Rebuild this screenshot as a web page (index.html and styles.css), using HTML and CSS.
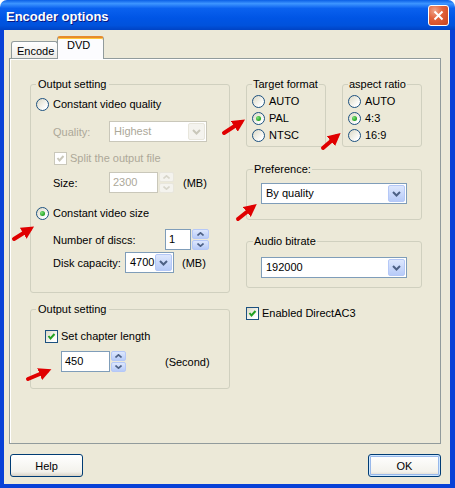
FILE: index.html
```html
<!DOCTYPE html>
<html lang="en">
<head>
  <meta charset="UTF-8">
  <title>Encoder options</title>
  <link rel="stylesheet" href="styles.css">
</head>
<body>

  <div class="window">
    <div class="titlebar">
      <span class="title">Encoder options</span>
      <span class="close">
        <svg width="11" height="11" viewBox="0 0 11 11"><path d="M1.5 1.5 L9.5 9.5 M9.5 1.5 L1.5 9.5" stroke="#fff" stroke-width="2"/></svg>
      </span>
    </div>

    <div class="frame">
      <!-- Tabs -->
      <div class="tabs">
        <div class="tab">Encode</div>
        <div class="tab active">DVD</div>
      </div>

      <div class="panel">
        <!-- Left column -->
        <div class="col-left">
          <fieldset class="group out-main">
            <legend>Output setting</legend>
            <div class="row opt first">
              <span class="radio"></span><span class="lbl">Constant video quality</span>
            </div>
            <div class="row sub quality">
              <span class="name w56 off">Quality:</span>
              <div class="combo off w-quality"><span class="val">Highest</span><span class="drop"><svg width="9" height="6" viewBox="0 0 9 6"><path d="M1 1 L4.5 4.5 L8 1" fill="none" stroke="#c9c7ba" stroke-width="2"/></svg></span></div>
            </div>
            <div class="row opt split">
              <span class="check off"><svg width="11" height="11" viewBox="0 0 11 11"><path d="M2.5 5 L4.5 7.5 L8.5 3" fill="none" stroke="#cac8bb" stroke-width="2"/></svg></span><span class="lbl off">Split the output file</span>
            </div>
            <div class="row sub size">
              <span class="name w56">Size:</span>
              <span class="edit off w-size">2300</span>
              <span class="spin off"><span><svg width="7" height="4" viewBox="0 0 7 4"><path d="M0.5 3.5 L3.5 0.8 L6.5 3.5" fill="none" stroke="#d8d6cb" stroke-width="1.6"/></svg></span><span><svg width="7" height="4" viewBox="0 0 7 4"><path d="M0.5 0.5 L3.5 3.2 L6.5 0.5" fill="none" stroke="#d8d6cb" stroke-width="1.6"/></svg></span></span>
              <span class="unit">(MB)</span>
            </div>
            <div class="row opt second">
              <span class="radio on"></span><span class="lbl">Constant video size</span>
            </div>
            <div class="row sub discs">
              <span class="name w112">Number of discs:</span>
              <span class="edit w-discs">1</span>
              <span class="spin"><span><svg width="7" height="4" viewBox="0 0 7 4"><path d="M0.5 3.5 L3.5 0.8 L6.5 3.5" fill="none" stroke="#4d6185" stroke-width="1.6"/></svg></span><span><svg width="7" height="4" viewBox="0 0 7 4"><path d="M0.5 0.5 L3.5 3.2 L6.5 0.5" fill="none" stroke="#4d6185" stroke-width="1.6"/></svg></span></span>
            </div>
            <div class="row sub disk">
              <span class="name w72">Disk capacity:</span>
              <div class="combo w-disk"><span class="val">4700</span><span class="drop"><svg width="9" height="6" viewBox="0 0 9 6"><path d="M1 1 L4.5 4.5 L8 1" fill="none" stroke="#4d6185" stroke-width="2"/></svg></span></div>
              <span class="unit">(MB)</span>
            </div>
          </fieldset>

          <fieldset class="group out-chapter">
            <legend>Output setting</legend>
            <div class="row opt chapter">
              <span class="check"><svg width="11" height="11" viewBox="0 0 11 11"><path d="M2.5 5 L4.5 7.5 L8.5 3" fill="none" stroke="#21a121" stroke-width="2"/></svg></span><span class="lbl">Set chapter length</span>
            </div>
            <div class="row seconds">
              <span class="edit w-sec">450</span>
              <span class="spin"><span><svg width="7" height="4" viewBox="0 0 7 4"><path d="M0.5 3.5 L3.5 0.8 L6.5 3.5" fill="none" stroke="#4d6185" stroke-width="1.6"/></svg></span><span><svg width="7" height="4" viewBox="0 0 7 4"><path d="M0.5 0.5 L3.5 3.2 L6.5 0.5" fill="none" stroke="#4d6185" stroke-width="1.6"/></svg></span></span>
              <span class="unit sec">(Second)</span>
            </div>
          </fieldset>
        </div>

        <!-- Right column -->
        <div class="col-right">
          <div class="pair">
            <fieldset class="group small">
              <legend>Target format</legend>
              <div class="row opt"><span class="radio"></span><span class="lbl">AUTO</span></div>
              <div class="row opt"><span class="radio on"></span><span class="lbl">PAL</span></div>
              <div class="row opt"><span class="radio"></span><span class="lbl">NTSC</span></div>
            </fieldset>
            <fieldset class="group small">
              <legend>aspect ratio</legend>
              <div class="row opt"><span class="radio"></span><span class="lbl">AUTO</span></div>
              <div class="row opt"><span class="radio on"></span><span class="lbl">4:3</span></div>
              <div class="row opt"><span class="radio"></span><span class="lbl">16:9</span></div>
            </fieldset>
          </div>

          <fieldset class="group pref">
            <legend>Preference:</legend>
            <div class="combo wide"><span class="val">By quality</span><span class="drop"><svg width="9" height="6" viewBox="0 0 9 6"><path d="M1 1 L4.5 4.5 L8 1" fill="none" stroke="#4d6185" stroke-width="2"/></svg></span></div>
          </fieldset>

          <fieldset class="group audio">
            <legend>Audio bitrate</legend>
            <div class="combo wide"><span class="val">192000</span><span class="drop"><svg width="9" height="6" viewBox="0 0 9 6"><path d="M1 1 L4.5 4.5 L8 1" fill="none" stroke="#4d6185" stroke-width="2"/></svg></span></div>
          </fieldset>

          <div class="row opt ac3">
            <span class="check"><svg width="11" height="11" viewBox="0 0 11 11"><path d="M2.5 5 L4.5 7.5 L8.5 3" fill="none" stroke="#21a121" stroke-width="2"/></svg></span><span class="lbl">Enabled DirectAC3</span>
          </div>
        </div>
      </div>

      <div class="buttons">
        <button class="btn">Help</button>
        <button class="btn default">OK</button>
      </div>
    </div>

    <!-- hand drawn arrows on top of the screenshot -->
    <svg class="marks" width="455" height="488" viewBox="0 0 455 488">
      <defs>
        <marker id="head" markerWidth="3.2" markerHeight="3.2" refX="2" refY="1.6" orient="auto">
          <path d="M0 0 L3.2 1.6 L0 3.2 z" fill="#e00000"/>
        </marker>
      </defs>
      <g stroke="#e00000" stroke-width="4" stroke-linecap="round" fill="none" marker-end="url(#head)">
        <path d="M14 239 L30 229"/>
        <path d="M224 133 L241 122"/>
        <path d="M323 148 L337 136"/>
        <path d="M238 219 L253 207"/>
        <path d="M28 379 L47 371"/>
      </g>
    </svg>
  </div>

</body>
</html>
```

FILE: styles.css
```css
* {
  margin: 0;
  padding: 0;
  box-sizing: border-box;
}

body {
  font-family: 'Liberation Sans', Arial, sans-serif;
  font-size: 11px;
  color: #000;
  background: #fff;
  width: 455px;
  height: 488px;
  overflow: hidden;
}

.window {
  position: relative;
  width: 455px;
  height: 488px;
  display: flex;
  flex-direction: column;
}

/* Title bar */
.titlebar {
  height: 30px;
  border-radius: 7px 7px 0 0;
  background: linear-gradient(#0a5fe6 0%, #3d95ff 12%, #0a61ef 28%, #0055e5 60%, #0052dc 85%, #0043c4 100%);
  display: flex;
  align-items: center;
  justify-content: space-between;
  padding: 0 6px;
}

.title {
  color: #fff;
  font-weight: bold;
  font-size: 13px;
  text-shadow: 1px 1px #0a1883;
  padding-top: 2px;
}

.close {
  width: 21px;
  height: 21px;
  border: 1px solid #fff;
  border-radius: 3px;
  background: radial-gradient(circle at 30% 25%, #f0a48a 0%, #e2633c 40%, #c8431e 100%);
  display: flex;
  align-items: center;
  justify-content: center;
  margin-top: 1px;
}

.frame {
  flex: 1;
  background: #ece9d8;
  border: solid #0841d7;
  border-width: 0 5px 4px 4px;
  display: flex;
  flex-direction: column;
}

/* Tabs */
.tabs {
  display: flex;
  align-items: flex-end;
  height: 23px;
  margin: 6px 0 0 7px;
}

.tab {
  width: 47px;
  height: 18px;
  border: 1px solid #919b9c;
  border-bottom: none;
  border-radius: 3px 3px 0 0;
  background: linear-gradient(#fff, #ecebe6);
  line-height: 18px;
  padding-left: 5px;
  white-space: nowrap;
}

.tab.active {
  position: relative;
  z-index: 1;
  height: 23px;
  margin-left: -1px;
  background: #fcfcfe;
  border-top: 2px solid #e68b2c;
  box-shadow: inset 0 1px #ffc83c;
  padding-left: 9px;
  line-height: 14px;
}

.panel {
  margin: -1px 0 0 5px;
  width: 432px;
  height: 386px;
  border: 1px solid #919b9c;
  box-shadow: inset 1px 1px #fff;
  display: flex;
  gap: 16px;
  padding: 19px 0 0 20px;
}

/* Group boxes */
.group {
  border: 1px solid #d0d0bf;
  border-radius: 3px;
  padding: 0 0 0 5px;
}

.group legend {
  padding: 0 2px;
  line-height: 13px;
}

.col-left {
  width: 200px;
  display: flex;
  flex-direction: column;
}

.out-main {
  padding-bottom: 19px;
}

.out-chapter {
  margin-top: 10px;
  padding-bottom: 16px;
}

.col-right {
  width: 176px;
  display: flex;
  flex-direction: column;
}

.pair {
  display: flex;
  gap: 16px;
}

.small {
  width: 80px;
  padding: 0 0 4px 5px;
}

.small .row {
  margin-top: 3px;
}

.small legend {
  padding: 0 1px;
}

.pref {
  margin-top: 16px;
  padding: 0 0 15px 14px;
}

.pref legend,
.audio legend {
  margin-left: -8px;
  padding: 0 1px;
}

.pref .combo {
  margin-top: 7px;
}

.audio {
  margin-top: 15px;
  padding: 0 0 9px 14px;
}

.audio .combo {
  margin-top: 9px;
}

/* Rows */
.row {
  display: flex;
  align-items: center;
  height: 21px;
}

.row.opt {
  height: 14px;
}

.row.first { margin-top: 6px; }
.row.quality { margin-top: 10px; }
.row.split { margin-top: 9px; margin-left: 18px; }
.row.size { margin-top: 7px; }
.row.second { margin-top: 13px; }
.row.discs { margin-top: 9px; }
.row.disk { margin-top: 2px; }
.row.chapter { margin-top: 13px; margin-left: 9px; }
.row.seconds { margin-top: 8px; margin-left: 25px; }
.row.ac3 { margin-top: 18px; }

.row.sub {
  padding-left: 17px;
}

.lbl {
  margin-left: 4px;
  white-space: nowrap;
}

.check + .lbl {
  margin-left: 3px;
}

.name { white-space: nowrap; }
.w56 { width: 56px; }
.w72 { width: 72px; }
.w112 { width: 112px; }

.off {
  color: #aca899;
}

.unit {
  margin-left: 9px;
}

.disk .unit {
  margin-left: 8px;
}

.unit.sec {
  margin-left: 39px;
}

/* Controls */
.radio {
  position: relative;
  flex: none;
  width: 13px;
  height: 13px;
  border: 1px solid #1c5180;
  border-radius: 50%;
  background: linear-gradient(135deg, #dcd9c5, #fff 80%);
}

.radio.on::after {
  content: "";
  position: absolute;
  left: 3px;
  top: 3px;
  width: 5px;
  height: 5px;
  border-radius: 50%;
  background: radial-gradient(circle at 35% 35%, #7ee27a, #21a121 70%);
}

.check {
  flex: none;
  width: 13px;
  height: 13px;
  border: 1px solid #1c5180;
  background: linear-gradient(135deg, #dcd9c5, #fff 80%);
  display: flex;
}

.check.off {
  border-color: #cac8bb;
  background: #fff;
}

.combo {
  display: flex;
  height: 21px;
  border: 1px solid #7f9db9;
  background: #fff;
  padding: 1px;
}

.combo .val {
  flex: 1;
  padding-left: 3px;
  line-height: 17px;
  white-space: nowrap;
}

.combo .drop {
  width: 17px;
  border: 1px solid #b5c8f7;
  border-radius: 2px;
  background: linear-gradient(#dde7fd, #b7cbf8);
  display: flex;
  align-items: center;
  justify-content: center;
}

.combo.off {
  border-color: #c9c7ba;
}

.combo.off .drop {
  border-color: #e8e6dc;
  background: #f4f3ee;
}

.w-quality { width: 98px; }
.w-disk { width: 49px; }
.combo.wide { width: 146px; }

.edit {
  height: 21px;
  border: 1px solid #7f9db9;
  background: #fff;
  padding-left: 3px;
  line-height: 19px;
}

.edit.off {
  border-color: #c9c7ba;
}

.w-size { width: 49px; }
.w-discs { width: 26px; }
.w-sec { width: 49px; }

.spin {
  width: 15px;
  height: 21px;
  display: flex;
  flex-direction: column;
  gap: 1px;
  margin-left: 1px;
}

.discs .spin {
  width: 17px;
}

.spin span {
  flex: 1;
  border: 1px solid #b5c8f7;
  border-radius: 2px;
  background: linear-gradient(#dde7fd, #b7cbf8);
  display: flex;
  align-items: center;
  justify-content: center;
}

.spin.off span {
  border-color: #e8e6dc;
  background: #f4f3ee;
}

/* Buttons */
.buttons {
  display: flex;
  justify-content: space-between;
  margin: 10px 9px 0 6px;
}

.btn {
  width: 73px;
  height: 23px;
  border: 1px solid #003c74;
  border-radius: 3px;
  background: linear-gradient(#fff, #f3f2ec 80%, #d8d2c6);
  font: inherit;
  color: #000;
}

.btn.default {
  box-shadow: inset 0 0 0 1px #cee7ff, inset 0 0 0 2px #98b8ea;
}

.marks {
  position: absolute;
  top: 0;
  left: 0;
  pointer-events: none;
}
```
